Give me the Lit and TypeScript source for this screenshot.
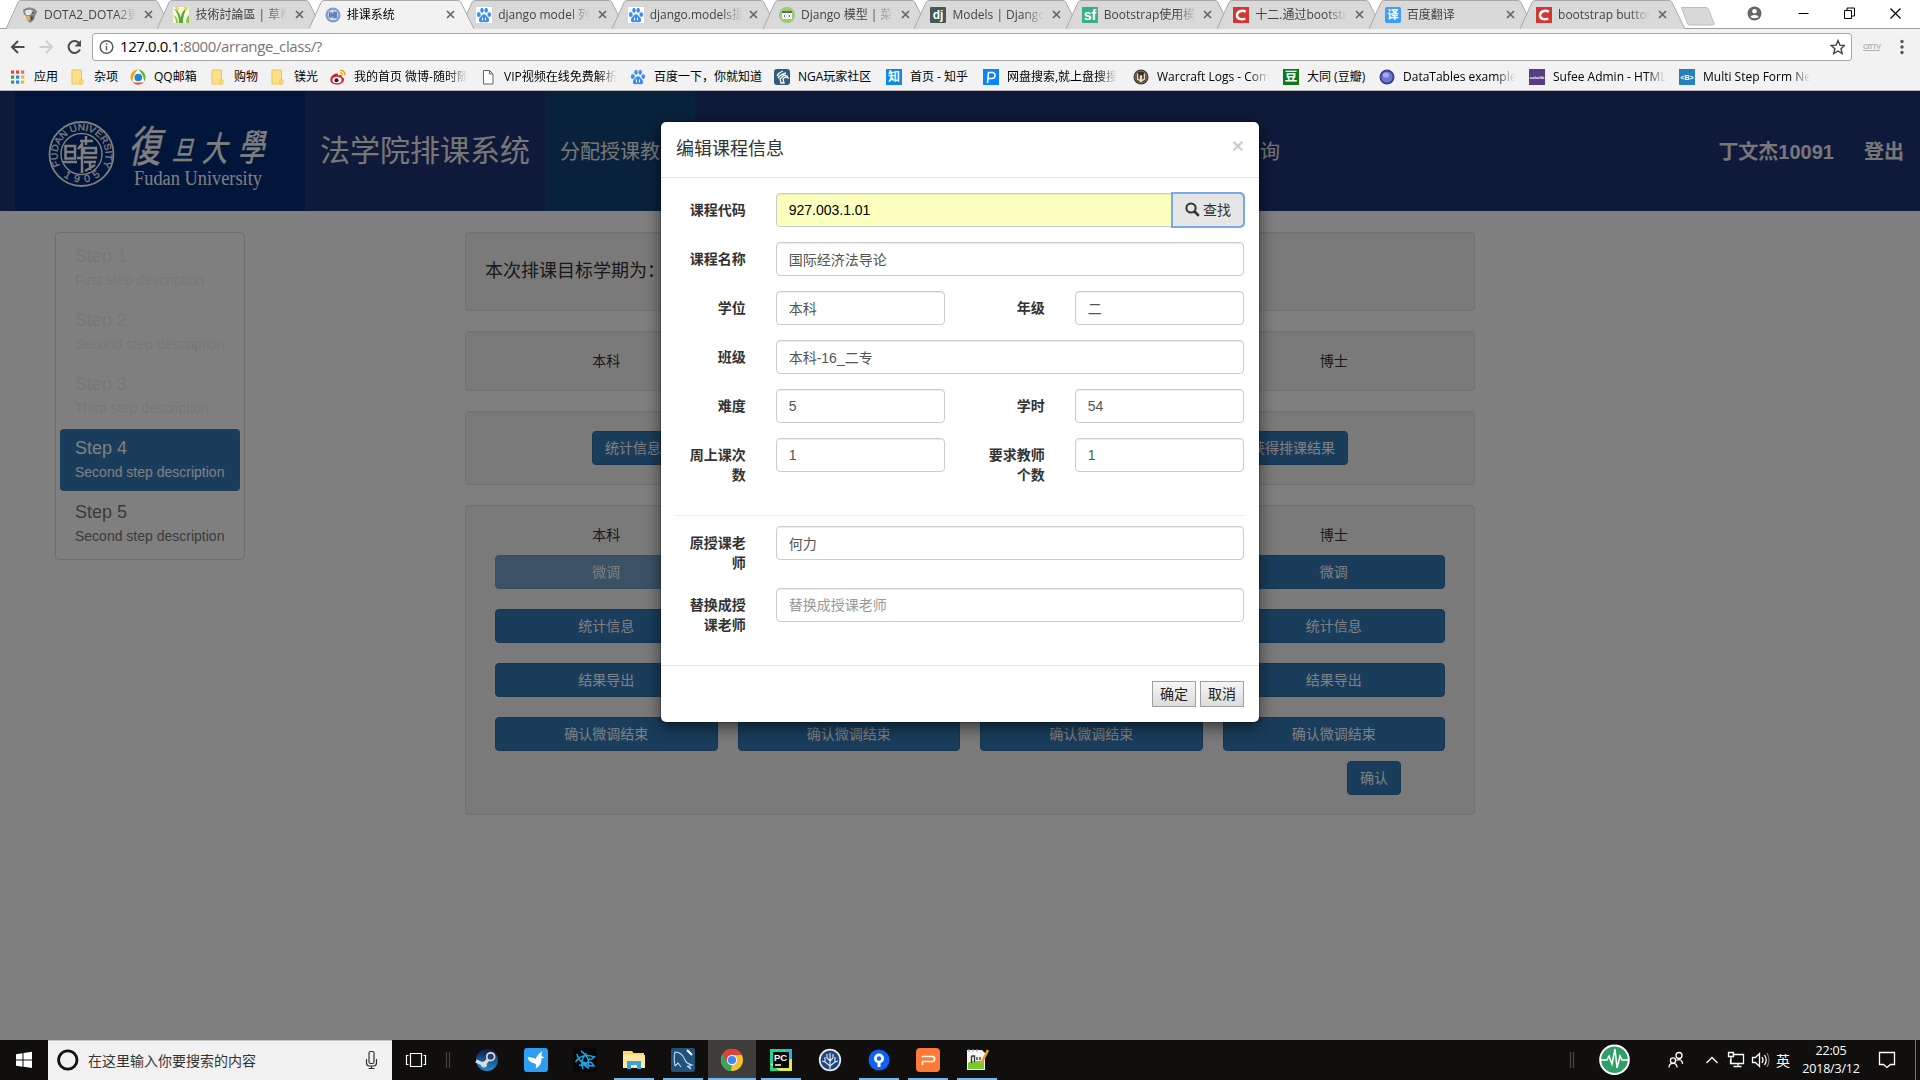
import { LitElement, html, svg, css, nothing } from "lit";
import { customElement } from "lit/decorators.js";
import { classMap } from "lit/directives/class-map.js";

type Glyph = keyof typeof glyphs;

const paw = svg`<g fill="#3b8bf5"><ellipse cx="2.8" cy="7.4" rx="1.9" ry="2.5"/><ellipse cx="6" cy="3.2" rx="1.7" ry="2.5"/><ellipse cx="10.2" cy="3.2" rx="1.7" ry="2.5"/><ellipse cx="13.3" cy="7.6" rx="1.8" ry="2.4"/><path d="M8 7.2c2 0 2.6 2 4 3.2 1.800 1.600 1.500 4.800-1.200 4.900-1 0-1.700-.4-2.800-.4s-1.800.4-2.800.4c-2.700-.1-3-3.300-1.200-4.900C5.400 9.200 6 7.200 8 7.200z"/></g><path d="M6.500 10.500v3M9.500 10.500v3" stroke="#fff" stroke-width="1"/>`;

const box = (fill: string, label: string, size = 11, r = 0, y = 12.2) =>
  svg`<rect width="16" height="16" rx=${r} fill=${fill}/><text x="8" y=${y} font-size=${size} font-weight="700" text-anchor="middle" fill="#fff" font-family="Liberation Sans, Noto Sans CJK SC, sans-serif">${label}</text>`;

const glyphs = {
  dota: svg`<path d="M1 3c2-2 6-3 9-2 3 .5 4.500 2 5 4l-2 4-1 4-4 3-3-3-1-4C2 8 1 5 1 3z" fill="#858585"/><path d="M3 4c3-2 7-1.500 8 .5L8 8 4 8z" fill="#e6e6e6"/><path d="M4.500 8.500l3 .5.5 3-1.500 2-2-2z" fill="#f0b43c"/><path d="M9.500 4.500l3 1-2 1zM8.500 9l3 1-2 4z" fill="#444"/>`,
  grass: svg`<rect width="16" height="16" fill="#f4f8df"/><path d="M6 16C6 9 4 5 1 2c4 1 6 5 7 9 0-4 2-8 6-10-3 4-4 9-4 15z" fill="#57a639"/><path d="M3 16c0-4-1-6-3-8 3 1 5 4 5 8zM13 16c0-4 1-6 3-8v8z" fill="#8cc63f"/><path d="M2 0h3l1 3-2 1zM11 0h4l-1 3-2 1z" fill="#f9d71c"/>`,
  seal: svg`<circle cx="8" cy="8" r="7.600" fill="#7e9fd0"/><circle cx="8" cy="8" r="5.200" fill="#cfdcf0"/><path d="M4.500 6H7v4H4.500zM9 4.500v7M11 5v6M4 8h8M9 6h3M9 10h3" stroke="#3f66aa" stroke-width="1.100" fill="none"/>`,
  paw: svg`<rect width="16" height="16" fill="#fff"/>${paw}`,
  pawPlain: paw,
  runoob: svg`<circle cx="8" cy="8" r="8" fill="#9acb6c"/><rect x="3" y="4" width="10" height="8" rx="1" fill="#fff"/><rect x="3" y="4" width="10" height="2" fill="#5b6b6b"/><path d="M6.500 7.500L5 9l1.500 1.500M9.500 7.500L11 9l-1.500 1.500" stroke="#5b6b6b" fill="none" stroke-width=".9"/>`,
  dj: box("#44594f", "dj", 12, 1, 11.500),
  sf: box("#37b183", "sf", 14, 0, 13),
  csdn: svg`<rect width="16" height="16" fill="#d63535"/><path d="M12.800 4.600C9 2.800 4.200 4.200 4 8.200c-.1 4 4.500 4.800 8.300 3.400" stroke="#fff" stroke-width="2.500" fill="none"/>`,
  fanyi: box("#3f9dfb", "译", 11.500, 2),
  apps: svg`${["#e2453b", "#e2453b", "#f06a3c", "#3f9b54", "#2f83e0", "#edb92e", "#3f9b54", "#2f83e0", "#edb92e"].map((c, i) => svg`<rect x=${1 + (i % 3) * 5} y=${1.500 + Math.floor(i / 3) * 5} width="3.200" height="3.200" fill=${c}/>`)}`,
  folder: svg`<path d="M2 1h9.500v14H2z" fill="#fce08a" stroke="#ecc454"/><path d="M10 11h3v4h-3z" fill="#fce08a" stroke="#ecc454"/>`,
  qq: svg`<circle cx="8" cy="8" r="7.800" fill="#fff"/><path d="M8 .4C4 .4.400 4 .400 8c0 2 1 4 2 5C3 9 4 4 8 .4z" fill="#f7a41d"/><path d="M8 .4c4 0 7.600 3.600 7.600 7.600 0 2-.6 3.400-1.600 4.600C14 7 11 3 8 .4z" fill="#5ab83c"/><path d="M2.500 13c3 3.500 8 3.500 11.500 0-3 .6-9 1-11.500 0z" fill="#e9522d"/><circle cx="8.300" cy="8.500" r="3.800" fill="#1d87d6"/>`,
  weibo: svg`<path d="M6.500 4.500C3 5 .3 8 .3 11c0 3 3.500 4.500 7 4.500 4 0 6.700-2.500 6.700-5 0-1.700-1.500-2.300-2.300-2.500.6-2-1-2.700-3.700-1.600.3-1.200 0-2-1.500-1.900z" fill="#e6162d"/><ellipse cx="7" cy="11" rx="4.600" ry="3.300" fill="#fff"/><circle cx="6.500" cy="11.200" r="2" fill="#222"/><path d="M10 1.500c3-.7 5.500 1.800 4.700 4.800M10.300 4c1.300-.3 2.300.6 2 2" stroke="#f39800" stroke-width="1.200" fill="none"/>`,
  page: svg`<path d="M3.500 1.500h6l3.500 3.500v10H3.500zM9.500 1.500V5H13" fill="#fff" stroke="#666"/>`,
  nga: svg`<rect width="16" height="16" rx="3" fill="#315c7c"/><path d="M3 7c1-2 3-4 6-5M4 9c1-2 4-4 8-5M7 14l-1-4 4-4 3 1 1 2-3-1-2 2 1 4z" stroke="#fff" stroke-width="1.300" fill="none"/>`,
  zhihu: box("#0f88eb", "知", 12),
  pan: svg`<rect width="16" height="16" fill="#0a84ff"/><path d="M4.500 14l1-10.500h4c3.500 0 3.500 6-.5 6H5.500" stroke="#fff" stroke-width="1.600" fill="none"/>`,
  warcraft: svg`<circle cx="8" cy="8" r="7.500" fill="#3a2f26"/><circle cx="8" cy="8" r="6" fill="none" stroke="#8b7b65"/><path d="M4.500 4.500v5.500l3 2V7l1 0v5l3-2V4.500" stroke="#e9dcc3" stroke-width="1.500" fill="none"/>`,
  douban: box("#0a7a1b", "豆", 12.500),
  datatables: svg`<circle cx="8" cy="8" r="7.500" fill="#3a3f8f"/><circle cx="8" cy="8" r="5.600" fill="#7078d6"/><ellipse cx="7" cy="6" rx="3" ry="2.500" fill="#a5acf0"/>`,
  colorlib: box("#563d84", "colorlib", 4, 0, 9.500),
  bcode: box("#2780be", "<B>", 7, 0, 10.500),
};

const icon = (name: Glyph, cls = "ico") => html`<svg class=${cls} viewBox="0 0 16 16">${glyphs[name]}</svg>`;

const tabs: { icon: Glyph; label: string; active?: boolean }[] = [
  { icon: "dota", label: "DOTA2_DOTA2更" },
  { icon: "grass", label: "技術討論區 | 草榴" },
  { icon: "seal", label: "排课系统", active: true },
  { icon: "paw", label: "django model 列" },
  { icon: "paw", label: "django.models提" },
  { icon: "runoob", label: "Django 模型 | 菜" },
  { icon: "dj", label: "Models | Django" },
  { icon: "sf", label: "Bootstrap使用模" },
  { icon: "csdn", label: "十二.通过bootstr" },
  { icon: "fanyi", label: "百度翻译" },
  { icon: "csdn", label: "bootstrap button" },
];

const bookmarks: { icon: Glyph; label: string; w: number }[] = [
  { icon: "apps", label: "应用", w: 60 },
  { icon: "folder", label: "杂项", w: 60 },
  { icon: "qq", label: "QQ邮箱", w: 80 },
  { icon: "folder", label: "购物", w: 60 },
  { icon: "folder", label: "镁光", w: 60 },
  { icon: "weibo", label: "我的首页 微博-随时随", w: 150 },
  { icon: "page", label: "VIP视频在线免费解析", w: 150 },
  { icon: "pawPlain", label: "百度一下，你就知道", w: 144 },
  { icon: "nga", label: "NGA玩家社区", w: 112 },
  { icon: "zhihu", label: "首页 - 知乎", w: 97 },
  { icon: "pan", label: "网盘搜索,就上盘搜搜", w: 150 },
  { icon: "warcraft", label: "Warcraft Logs - Com", w: 150 },
  { icon: "douban", label: "大同 (豆瓣)", w: 96 },
  { icon: "datatables", label: "DataTables example", w: 150 },
  { icon: "colorlib", label: "Sufee Admin - HTML", w: 150 },
  { icon: "bcode", label: "Multi Step Form Ne", w: 150 },
];

const uiFont = css`"Open Sans", "Noto Sans CJK SC", sans-serif`;

@customElement("browser-chrome")
class BrowserChrome extends LitElement {
  static styles = css`
    :host { display: flex; flex-direction: column; height: 91px; box-sizing: border-box; background: #f2f2f2; border-bottom: 1px solid #b6b4b6; font: 12px/16px ${uiFont}; color: #000; }
    .strip { display: flex; height: 28px; background: #fff; border-bottom: 1px solid #a0a0a0; padding-left: 6px; }
    .tab { display: grid; width: 165px; height: 28px; margin-right: -13.600px; flex: none; }
    .tab > * { grid-area: 1 / 1; }
    .tab.active { z-index: 1; height: 29px; }
    .shape { width: 165px; height: 29px; display: block; overflow: hidden; }
    .face { display: flex; align-items: center; padding: 0 17px 2px 16px; height: 25px; margin-top: 2px; }
    .ico { width: 16px; height: 16px; flex: none; }
    .label { flex: none; width: 92px; margin-left: 6px; overflow: hidden; white-space: nowrap; color: #444; -webkit-mask-image: linear-gradient(to right, #000 78%, transparent); mask-image: linear-gradient(to right, #000 78%, transparent); }
    .active .label { color: #000; }
    .x { width: 9px; height: 9px; margin-left: 7.500px; stroke: #666; stroke-width: 1.700; }
    .newtab { width: 36px; height: 19px; margin: 7px 0 0 9px; flex: none; }
    .controls { display: flex; margin-left: auto; height: 26px; align-items: center; padding-right: 18px; }
    .controls svg { width: 15px; height: 15px; fill: none; stroke: #000; margin-left: 31px; }
    .controls svg:nth-child(2) { margin-left: 34px; }
    .bar { display: flex; height: 35px; padding-bottom: 2px; align-items: center; flex: none; }
    .nav { width: 92px; height: 28px; flex: none; }
    .omni { display: flex; align-items: center; box-sizing: border-box; width: 1760px; height: 28px; border: 1px solid #a9a9a9; border-radius: 3px; background: #fff; padding: 0 6px; }
    .omni svg { width: 16px; height: 16px; }
    .url { flex: 1; margin: 0 0 1px 5px; font-size: 15px; line-height: 20px; letter-spacing: -0.400px; color: #777; }
    .url b { font-weight: 400; color: #000; }
    .ext { width: 30px; font: 700 7px "Liberation Sans", sans-serif; color: #b5b5b5; margin-left: 11px; text-decoration: underline; letter-spacing: -0.600px; }
    .dots { width: 4px; height: 16px; fill: #555; margin-left: 7px; }
    .marks { display: flex; padding-left: 10px; height: 22px; align-items: center; }
    .mark { display: flex; align-items: center; flex: none; }
    .mark .text { margin-left: 8px; max-width: 114px; overflow: hidden; white-space: nowrap; }
    .mark .fade { -webkit-mask-image: linear-gradient(to right, #000 82%, transparent 99%); mask-image: linear-gradient(to right, #000 82%, transparent 99%); }
  `;
  render() {
    return html`
      <div class="strip">
        ${tabs.map((t) => html`
          <div class=${classMap({ tab: true, active: !!t.active })}>
            <svg class="shape" viewBox="0 0 165 29">
              <path d="M0 29 L12 2.500 Q13 .5 15 .5 H149 Q151 .5 152 2.500 L165 29" fill=${t.active ? "#f2f2f2" : "#d9d9d9"} stroke="#a8a8a8"/>
            </svg>
            <div class="face">${icon(t.icon)}<span class="label">${t.label}</span>
              <svg class="x" viewBox="0 0 9 9"><path d="M1 1l7 7M8 1l-7 7"/></svg></div>
          </div>`)}
        <svg class="newtab" viewBox="0 0 36 19"><path d="M1.500 .5H26q2 0 2.600 2l5.500 14q.4 1.500-1.500 1.500H9.500Q8 18 7.300 16z" fill="#d8d8d8" stroke="#bdbdbd"/></svg>
        <div class="controls">
          <svg viewBox="0 0 15 15"><circle cx="7.500" cy="7.500" r="7" fill="#666" stroke="none"/><circle cx="7.500" cy="5.200" r="2.300" fill="#fff" stroke="none"/><path d="M3.500 11c0-2.700 8-2.700 8 0-2 1.600-6 1.600-8 0z" fill="#fff" stroke="none"/></svg>
          <svg viewBox="0 0 15 15"><path d="M2.500 7.500h10"/></svg>
          <svg viewBox="0 0 15 15"><path d="M2.500 4.500h7v8h-7zM5 4.500v-2.500h7.500v8H9.500"/></svg>
          <svg viewBox="0 0 15 15"><path d="M2.500 2.500l10 10M12.500 2.500l-10 10" stroke-width="1.200"/></svg>
        </div>
      </div>
      <div class="bar">
        <svg class="nav" viewBox="0 0 92 28" fill="none" stroke="#4c4c4c" stroke-width="2"><path d="M24.500 14H12.500M18 8l-6 6 6 6"/><path d="M39.500 14h12M46 8l6 6-6 6" stroke="#cfcfcf"/><path d="M79.500 10.500a6 6 0 1 0 .5 6"/><path d="M81 7v6.500h-6.500z" fill="#4c4c4c" stroke="none"/></svg>
        <div class="omni">
          <svg viewBox="0 0 16 16" fill="none" stroke="#555" stroke-width="1.400"><circle cx="7.500" cy="8" r="6.300"/><path d="M7.500 7v4.500M7.500 4.300v1.500"/></svg>
          <span class="url"><b>127.0.0.1</b>:8000/arrange_class/?</span>
          <svg viewBox="0 0 16 16" fill="none" stroke="#444" stroke-width="1.400"><path d="M9 1.500l1.900 4.600 4.600.4-3.500 3.200 1.100 4.800L9 12l-4.200 2.500 1.100-4.800L2.200 6.500l4.900-.4z"/></svg>
        </div>
        <span class="ext">CITTV</span>
        <svg class="dots" viewBox="0 0 4 16"><circle cx="2" cy="2.500" r="1.700"/><circle cx="2" cy="8" r="1.700"/><circle cx="2" cy="13.500" r="1.700"/></svg>
      </div>
      <div class="marks">
        ${bookmarks.map((b) => html`<div class="mark" style="width:${b.w}px">${icon(b.icon)}<span class=${classMap({ text: true, fade: b.w === 150 })}>${b.label}</span></div>`)}
      </div>`;
  }
}

@customElement("site-header")
class SiteHeader extends LitElement {
  static styles = css`
    :host { display: flex; height: 120px; background: #1e3474; color: #eee; font: 20px/122px "Liberation Sans", "Noto Sans CJK SC", sans-serif; padding: 0 16px 0 15px; }
    .logo { width: 290px; height: 120px; background: #042c78; flex: none; }
    .brand { width: 210px; padding: 0 15px; font-size: 30px; white-space: nowrap; line-height: 120px; }
    .on { width: 120px; padding: 0 15px; background: #124478; white-space: nowrap; height: 120px; }
    .item { margin-left: 565px; }
    .user { margin-left: auto; font-weight: 700; display: flex; gap: 30px; }
  `;
  render() {
    return html`
      <svg class="logo" viewBox="0 0 290 120" fill="#fff" font-family="Liberation Sans, sans-serif">
        <defs>
          <path id="arc" d="M45.200 74.500 A24 24 0 1 1 87.800 74.500"/>
          <path id="low" d="M43.500 80.500 A29.500 29.500 0 0 0 89.500 80.500"/>
        </defs>
        <g fill="none" stroke="#fff"><circle cx="66.500" cy="63" r="32" stroke-width="1.800"/><circle cx="66.500" cy="63" r="20.500" stroke-width="1.400"/></g>
        <text font-size="9.500" stroke="#fff" stroke-width=".2" textLength="99" lengthAdjust="spacingAndGlyphs"><textPath href="#arc">FUDAN UNIVERSITY</textPath></text>
        <text font-size="10.500" stroke="#fff" stroke-width=".2" textLength="40"><textPath href="#low" startOffset="7">1905</textPath></text>
        <g stroke="#fff" stroke-width="2.500" fill="none"><path d="M50.500 55h9.500v12.500h-9.500zM50.500 61h9.500M48 71h14M63 58l4-5v29M62 67h5M65 50h13M71 45v9M69 57h12v5H69zM68.500 66.500h13.500M69 71h12M75 71v8M70 80l10-6"/></g>
        <g font-family="Noto Sans CJK TC, sans-serif" stroke="#fff" stroke-width=".5">
          <text transform="translate(113 71) skewX(-12) scale(.76 1)" font-size="43">復</text>
          <text transform="translate(157 69) skewX(-14) scale(.78 1)" font-size="27">旦</text>
          <text transform="translate(187 70) skewX(-12) scale(.74 1)" font-size="34">大</text>
          <text transform="translate(223 70) skewX(-12) scale(.7 1)" font-size="37">學</text>
        </g>
        <text x="119" y="94" font-family="Liberation Serif, serif" font-size="20.500" textLength="128" lengthAdjust="spacingAndGlyphs">Fudan University</text>
      </svg>
      <div class="brand">法学院排课系统</div>
      <div class="on">分配授课教</div>
      <div class="item">询</div>
      <div class="user"><span>丁文杰10091</span><span>登出</span></div>`;
  }
}

const steps = [
  ["Step 1", "First step description", "off"],
  ["Step 2", "Second step description", "off"],
  ["Step 3", "Third step description", "off"],
  ["Step 4", "Second step description", "cur"],
  ["Step 5", "Second step description", ""],
];

@customElement("schedule-page")
class SchedulePage extends LitElement {
  static styles = css`
    :host { display: flex; align-items: flex-start; padding: 21px 0 0 55px; font: 14px/20px "Liberation Sans", "Noto Sans CJK SC", sans-serif; color: #333; }
    .steps { box-sizing: border-box; width: 190px; height: 328px; border: 1px solid #ddd; border-radius: 4px; padding: 4px; display: flex; flex-direction: column; gap: 2px; flex: none; }
    .step { height: 62px; box-sizing: border-box; padding: 9px 0 0 15px; border-radius: 4px; color: #777; white-space: nowrap; }
    .step .t { font-size: 18px; line-height: 20px; }
    .step .d { margin-top: 4px; }
    .step.off { color: #eee; }
    .step.cur { background: #337ab7; color: #fff; }
    .main { margin-left: 220px; width: 1010px; display: flex; flex-direction: column; gap: 20px; }
    .well { box-sizing: border-box; border: 1px solid #e3e3e3; border-radius: 4px; background: #f5f5f5; box-shadow: inset 0 1px 1px rgba(0,0,0,.05); padding: 19px; }
    .a { height: 79px; font-size: 18px; line-height: 39px; }
    .b { height: 60px; }
    .c { height: 74px; display: flex; justify-content: space-between; padding: 19px 126px; }
    .d4 { height: 310px; }
    .cols { display: grid; grid-template-columns: repeat(4, 1fr); column-gap: 20px; padding: 0 10px; text-align: center; }
    .stack { display: grid; row-gap: 20px; grid-auto-rows: 34px; margin-top: 10px; }
    .c1 { grid-column: 1; } .c2 { grid-column: 2; } .c3 { grid-column: 3; } .c4 { grid-column: 4; }
    .btn { box-sizing: border-box; height: 34px; border: 1px solid #2e6da4; border-radius: 4px; background: #337ab7; color: #fff; padding: 6px 12px; font: inherit; white-space: nowrap; }
    .btn.dim { opacity: .65; }
    .end { display: flex; justify-content: flex-end; padding: 10px 54px 0; }
  `;
  private rows: string[] = ["微调", "统计信息", "结果导出"];
  render() {
    return html`
      <div class="steps">${steps.map(([t, d, k]) => html`<div class="step ${k}"><div class="t">${t}</div><div class="d">${d}</div></div>`)}</div>
      <div class="main">
        <div class="well a">本次排课目标学期为：</div>
        <div class="well b"><div class="cols"><span class="c1">本科</span><span class="c4">博士</span></div></div>
        <div class="well c"><button class="btn">统计信息</button><button class="btn">获得排课结果</button></div>
        <div class="well d4">
          <div class="cols"><span class="c1">本科</span><span class="c4">博士</span></div>
          <div class="cols stack">
            ${this.rows.map((r, i) => html`<button class="btn c1 ${i ? "" : "dim"}">${r}</button><button class="btn c4">${r}</button>`)}
            ${[1, 2, 3, 4].map((n) => html`<button class="btn c${n}">确认微调结束</button>`)}
          </div>
          <div class="end"><button class="btn">确认</button></div>
        </div>
      </div>`;
  }
}

@customElement("course-dialog")
class CourseDialog extends LitElement {
  static styles = css`
    :host { display: block; box-sizing: border-box; width: 600px; background: #fff; background-clip: padding-box; border: 1px solid rgba(0,0,0,.2); border-radius: 6px; box-shadow: 0 5px 15px rgba(0,0,0,.5); font: 14px/20px "Liberation Sans", "Noto Sans CJK SC", sans-serif; color: #333; }
    .head { display: flex; justify-content: space-between; height: 56px; box-sizing: border-box; padding: 15px 15px 0; border-bottom: 1px solid #e5e5e5; font-size: 18px; line-height: 25px; }
    .close { font: 700 21px/21px "Liberation Sans", sans-serif; opacity: .2; color: #000; margin-top: -2px; }
    .body { padding: 15px 0; }
    .row { display: flex; margin-bottom: 15px; }
    .name { box-sizing: border-box; width: 99.670px; padding: 7px 15px 0; text-align: right; font-weight: 700; flex: none; }
    .field { box-sizing: border-box; width: 199.330px; padding: 0 15px; display: flex; flex: none; height: 34px; }
    .field.wide { width: 498.330px; }
    input { box-sizing: border-box; flex: 1; min-width: 0; height: 34px; padding: 6px 12px; border: 1px solid #ccc; border-radius: 4px; box-shadow: inset 0 1px 1px rgba(0,0,0,.075); font: inherit; color: #555; background: #fff; }
    input::placeholder { color: #999; opacity: 1; }
    input.auto { background: #faffbd; color: #000; border-radius: 4px 0 0 4px; }
    .find { box-sizing: border-box; width: 72px; height: 34px; margin-left: -1px; border: 1px solid #8c8c8c; border-radius: 0 4px 4px 0; background: #e6e6e6; color: #333; font: inherit; padding: 0; outline: 2px solid #7aa7ee; outline-offset: -1px; display: flex; align-items: center; justify-content: center; gap: 3px; }
    .find svg { width: 15px; height: 15px; margin-top: -2px; }
    .rule { height: 1px; background: #eee; margin: 30px 15px 10px; }
    .foot { display: flex; justify-content: flex-end; gap: 4px; padding: 15px; border-top: 1px solid #e5e5e5; }
    .plain { box-sizing: border-box; width: 44px; height: 26px; padding: 0; border: 1px solid #a0a0a0; border-radius: 0; background: linear-gradient(#f5f5f5, #dcdcdc); font: inherit; color: #222; }
  `;
  private wide(name: string, value: string, hint = "") {
    return html`<div class="row"><div class="name">${name}</div><div class="field wide"><input .value=${value} placeholder=${hint || nothing}></div></div>`;
  }
  private pair(a: string, av: string, b: string, bv: string) {
    return html`<div class="row"><div class="name">${a}</div><div class="field"><input .value=${av}></div><div class="name">${b}</div><div class="field"><input .value=${bv}></div></div>`;
  }
  render() {
    return html`
      <div class="head"><span>编辑课程信息</span><span class="close">×</span></div>
      <div class="body">
        <div class="row"><div class="name">课程代码</div><div class="field wide"><input class="auto" .value=${"927.003.1.01"}><button class="find"><svg viewBox="0 0 15 15" fill="none" stroke="#333"><circle cx="6" cy="6" r="4.600" stroke-width="2"/><path d="M9.500 9.500l4.300 4.300" stroke-width="2.600"/></svg>查找</button></div></div>
        ${this.wide("课程名称", "国际经济法导论")}
        ${this.pair("学位", "本科", "年级", "二")}
        ${this.wide("班级", "本科-16_二专")}
        ${this.pair("难度", "5", "学时", "54")}
        ${this.pair("周上课次数", "1", "要求教师个数", "1")}
        <div class="rule"></div>
        ${this.wide("原授课老师", "何力")}
        ${this.wide("替换成授课老师", "", "替换成授课老师")}
      </div>
      <div class="foot"><button class="plain">确定</button><button class="plain">取消</button></div>`;
  }
}

const apps = [
  { run: false, art: svg`<defs><linearGradient id="st" x1="0" y1="0" x2="0" y2="1"><stop offset="0" stop-color="#101d45"/><stop offset="1" stop-color="#1f8fd3"/></linearGradient></defs><circle cx="12" cy="12" r="11" fill="url(#st)"/><path d="M1 13l8 3.500 5-6" stroke="#d8dde2" stroke-width="3.500" fill="none"/><circle cx="15.700" cy="8.700" r="3.900" fill="#2b3f66" stroke="#d8dde2" stroke-width="1.700"/><circle cx="9" cy="16.500" r="3" fill="#d8dde2"/>` },
  { run: false, art: svg`<rect width="24" height="24" rx="3" fill="#2e9df4"/><path d="M3.500 9c4 0 6.500 1 8 2 2-4 4-6 7-8-1 3-1 4-1 5l3 1.500-3 1c0 5-2 8-6 10 1-2 1-4-.5-5-4-.500-6.500-2.500-7.500-6.500z" fill="#fff"/>` },
  { run: false, art: svg`<rect width="24" height="24" rx="2" fill="#050708"/><g fill="none" stroke="#1fa3e8" stroke-width="1.500"><path d="M8 3c5 3 9 9 7 17l-4-3M2.500 14c4-6 11-8 19-5l-4 3M4 6c2 8 8 12 17 12l-3-4M10 21c-2-5-2-10 3-15l1 4M5 10c3 4 8 6 13 4M6 17c5 1 9-2 11-7"/></g>` },
  { run: true, art: svg`<path d="M1 3h9l1.500 2H22v15H1z" fill="#f7d674"/><path d="M1 7h22v13H1z" fill="#ffe9a2"/><path d="M5 21v-8h14v8h-4v-4H9v4z" fill="#35a4de"/>` },
  { run: true, art: svg`<rect width="24" height="24" rx="2" fill="#20527b"/><path d="M4 18C3 12 3 7 4 4c5 0 8 3 10 8 1 3 3 4 7 5l-3 1 2 3-4-3M4 18l3-3 3 4" stroke="#c5dced" fill="none" stroke-width="1.100"/><path d="M16 2l5 5" stroke="#fff" stroke-width="2"/>` },
  { run: true, hot: true, art: svg`<circle cx="12" cy="12" r="11" fill="#f2c230"/><path d="M12 12L2.500 6.500A11 11 0 0 0 11 23z" fill="#3ba457"/><path d="M12 12L7 15 2.500 6.500a11 11 0 0 1 19.500.500H12z" fill="#db4437"/><path d="M7 15l5 3-2 5a11 11 0 0 1-8-6L2.500 7z" fill="#3ba457"/><circle cx="12" cy="12" r="5.200" fill="#f5f5f5"/><circle cx="12" cy="12" r="4.100" fill="#4285f4"/>` },
  { run: true, art: svg`<path d="M1 1h22v22H1z" fill="#22d58c"/><path d="M16 1h7v12z" fill="#21b6f0"/><path d="M1 16l10 7h12V11z" fill="#e5ec45"/><rect x="4" y="4" width="16" height="16" fill="#080808"/><text x="5" y="12.500" font-size="9.500" font-weight="700" fill="#fff" font-family="Liberation Sans, sans-serif">PC</text><path d="M6 17h6" stroke="#fff" stroke-width="1.500"/>` },
  { run: false, art: svg`<circle cx="12" cy="12" r="10.300" fill="#1f477d" stroke="#e8edf3" stroke-width="1.700"/><path d="M12 21V5M12 18l-5-4V9M12 18l5-4V9M12 13L9 10V6M12 13l3-3V6M7 14l-3-1M17 14l3-1" stroke="#dce6f1" stroke-width="1.200" fill="none"/>` },
  { run: true, art: svg`<circle cx="12" cy="12" r="10.500" fill="#0b63f6"/><circle cx="12" cy="10.500" r="3.600" fill="none" stroke="#fff" stroke-width="2.800"/><path d="M12 13v6" stroke="#fff" stroke-width="3"/>` },
  { run: true, art: svg`<rect width="24" height="24" rx="4" fill="#ff7a37"/><path d="M5.500 8.500h11q2 0 2 2v1q0 2-2 2h-10V17" fill="none" stroke="#fff" stroke-width="1.600"/>` },
  { run: true, art: svg`<path d="M2 2h15l3 3v17H2z" fill="#f5f5f5"/><path d="M3 15c5-3 10-1 16-3v9H3z" fill="#76cc2e"/><path d="M6.500 15V8M6.500 8h3v6M12 9v3M15 9v3" stroke="#333" stroke-width="1.300" fill="none"/><path d="M23 2L16 16" stroke="#e9a223" stroke-width="2.500"/><path d="M4 1v3M8 1v3M12 1v3" stroke="#999"/>` },
];

@customElement("task-bar")
class TaskBar extends LitElement {
  static styles = css`
    :host { display: flex; height: 40px; background: #110f0d; color: #fff; font: 14px/40px ${uiFont}; }
    svg { display: block; flex: none; }
    .start { width: 48px; height: 40px; }
    .search { display: flex; width: 344px; height: 40px; box-sizing: border-box; background: #f1f1f1; color: #333; border-top: 1px solid #c4c4c4; }
    .search span { flex: 1; white-space: nowrap; line-height: 39px; }
    .left { width: 75px; height: 40px; }
    .app { width: 40px; height: 40px; margin-right: 9px; display: flex; flex-direction: column; align-items: center; justify-content: space-between; flex: none; }
    .app svg { width: 24px; height: 24px; margin-top: 8px; }
    .app i { width: 40px; height: 2px; background: #76b9ed; }
    .app.hot { width: 48px; background: #3f3e3d; margin: 0 5px 0 -4px; }
    .app.hot i { width: 48px; }
    .tray { display: flex; margin-left: auto; }
    .icons { width: 208px; height: 40px; }
    .ime { width: 18px; line-height: 41px; }
    .clock { box-sizing: border-box; width: 77px; font: 12.500px/18px ${uiFont}; text-align: center; padding: 2px 3px 0 0; letter-spacing: -0.200px; }
    .note { width: 49px; height: 40px; }
  `;
  render() {
    return html`
      <svg class="start" viewBox="0 0 48 40" fill="#fff"><path d="M16 14.200l6.500-1v6.300H16zM23.500 13l8.500-1.200v7.700h-8.500zM16 20.500h6.500v6.300l-6.500-1zM23.500 20.500H32V28l-8.500-1.200z"/></svg>
      <div class="search">
        <svg width="40" height="40" viewBox="0 0 40 40"><circle cx="19.800" cy="19" r="9.200" fill="none" stroke="#111" stroke-width="2.800"/></svg>
        <span>在这里输入你要搜索的内容</span>
        <svg width="40" height="40" viewBox="0 0 40 40" fill="none" stroke="#333" stroke-width="1.200"><rect x="17" y="10.500" width="5" height="12" rx="1.500"/><path d="M14.500 18v4q0 3 3 3h4q3 0 3-3v-4M19.500 25v3M16.500 27.500h6"/></svg>
      </div>
      <svg class="left" viewBox="0 0 75 40" fill="none" stroke="#fff" stroke-width="1.200"><path d="M18.500 13.500h11v13h-11zM16.500 15.500h-2v9h2M31.500 15.500h2v9h-2"/><path d="M54.500 12v16M57.500 12v16" stroke="#444"/></svg>
      ${apps.map((a) => html`<div class=${classMap({ app: true, hot: !!(a as any).hot })}><svg viewBox="0 0 24 24">${a.art}</svg>${a.run ? html`<i></i>` : nothing}</div>`)}
      <div class="tray">
        <svg class="icons" viewBox="1568 0 208 40" fill="none" stroke="#fff" stroke-width="1.300">
          <path d="M1570.500 12v16M1573.500 12v16" stroke="#444"/>
          <circle cx="1614.500" cy="19.700" r="14.300" fill="#2f9e69" stroke-width="2"/>
          <path d="M1601 20h6l2-4 3 8 3-15 2 19 3-12 2 4h6" stroke-width="1.500"/>
          <circle cx="1679" cy="15.500" r="3"/><circle cx="1673" cy="20.500" r="2.600"/><path d="M1669 27.500c0-5.500 8-5.500 8 0M1676.500 20.500c3-2 6-.5 6 3.500"/>
          <path d="M1706.500 23l5.500-5.500 5.500 5.500"/>
          <path d="M1732.500 14.500h11v9h-13v-4M1728.500 12.500h5v4h-5zM1731 16.500v7M1738 23.500v3M1733.500 26.500h8"/>
          <path d="M1752.500 17.500h3l4-4v13l-4-4h-3zM1762 17q2 3 0 6M1764.500 15q3.500 5 0 10"/><path d="M1767 13q4 7 0 14" stroke="#777"/>
        </svg>
        <span class="ime">英</span>
        <div class="clock">22:05<br>2018/3/12</div>
        <svg class="note" viewBox="0 0 49 40" fill="none" stroke="#fff" stroke-width="1.300"><path d="M8.500 12.500h15v12h-4l-3.500 3-3.500-3h-4z"/><path d="M44.500 0v40" stroke="#777" stroke-width="1"/></svg>
      </div>`;
  }
}

@customElement("app-root")
class AppRoot extends LitElement {
  static styles = css`
    :host { display: flex; flex-direction: column; width: 1920px; height: 1080px; overflow: hidden; background: #fff; }
    .view { position: relative; height: 949px; overflow: hidden; }
    .veil { position: absolute; inset: 0; background: rgba(0,0,0,.5); display: flex; justify-content: center; align-items: flex-start; padding-top: 30px; }
  `;
  render() {
    return html`
      <browser-chrome></browser-chrome>
      <div class="view">
        <site-header></site-header>
        <schedule-page></schedule-page>
        <div class="veil"><course-dialog></course-dialog></div>
      </div>
      <task-bar></task-bar>`;
  }
}
